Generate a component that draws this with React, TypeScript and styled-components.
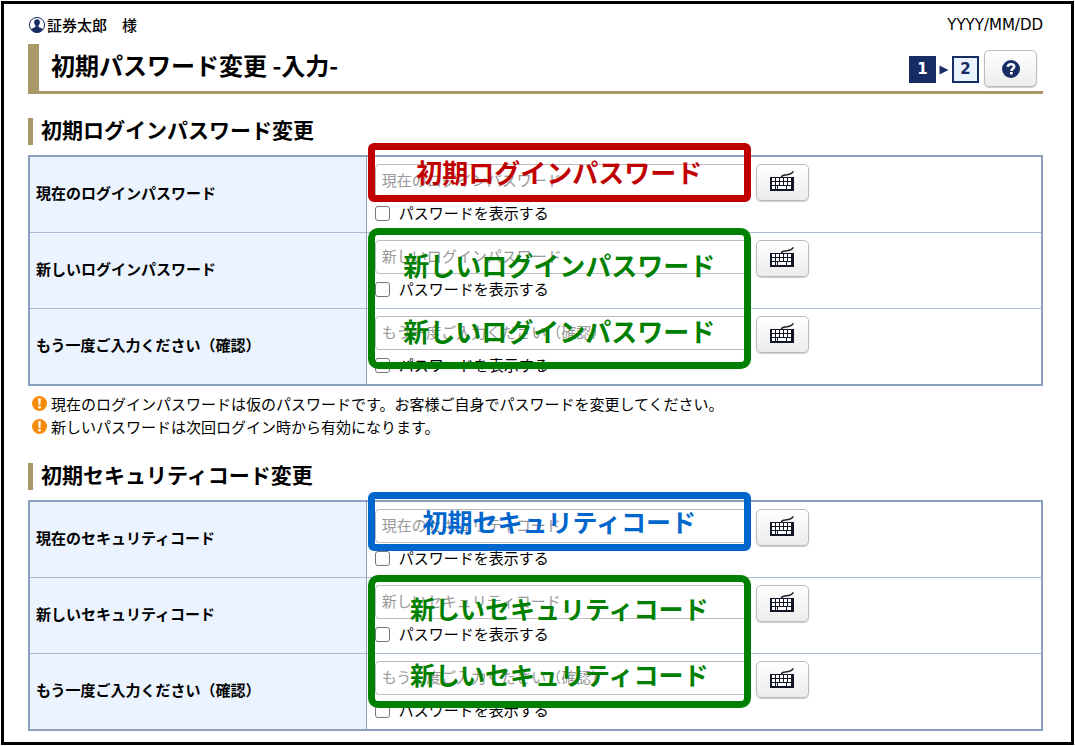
import React, { useId, useState } from "react";
import styled, { createGlobalStyle } from "styled-components";

const color = {
  navy: "#182c64",
  gold: "#ab9869",
  line: "#8aa0be",
  rowLine: "#a9bbd3",
  head: "#ebf3ff",
  orange: "#f68b0a",
  red: "#c00000",
  green: "#008000",
  blue: "#0066cc",
};

const GlobalStyle = createGlobalStyle`
  *, *::before, *::after { box-sizing: border-box; }
  body {
    margin: 0;
    background: #fff;
    color: #000;
    font: 15px/22px "Noto Sans CJK JP", sans-serif;
  }
  h1, h2, p { margin: 0; }
`;

const Page = styled.div`
  margin: 1px;
  padding: 10px 28px 11px 24px;
  border: 3px solid #000;
`;

const TopBar = styled.header`
  display: flex;
  justify-content: space-between;
  align-items: center;
  height: 22px;
  margin-bottom: 8px;
`;

const User = styled.div`
  display: flex;
  align-items: center;
  gap: 1px;
  font-weight: 500;
`;

const DateText = styled.time`
  font-family: "DejaVu Sans", sans-serif;
`;

const TitleBar = styled.div`
  display: flex;
  justify-content: space-between;
  align-items: flex-start;
  height: 50px;
  padding: 6px 6px 0 12px;
  border-bottom: 3px solid ${color.gold};
  border-left: 11px solid ${color.gold};
`;

const Title = styled.h1`
  font-size: 24px;
  line-height: 30px;
  font-weight: 700;
`;

const TitleTools = styled.div`
  display: flex;
  align-items: center;
  gap: 5px;
`;

const Steps = styled.div`
  display: flex;
  align-items: center;
  gap: 3px;
  padding-top: 2px;
`;

const Step = styled.span<{ $current?: boolean }>`
  width: 27px;
  height: 27px;
  border: 2px solid ${color.navy};
  background: ${(p) => (p.$current ? color.navy : color.head)};
  color: ${(p) => (p.$current ? "#fff" : color.navy)};
  font: bold 15px/23px "DejaVu Sans", sans-serif;
  text-align: center;
`;

const IconButton = styled.button`
  display: flex;
  flex: none;
  align-items: center;
  justify-content: center;
  width: 53px;
  height: 37px;
  padding: 0;
  border: 1px solid #bbb;
  border-radius: 5px;
  background: linear-gradient(#fff, #ececec);
  box-shadow: 0 1px 1px #ccc;
  cursor: pointer;
`;

const Section = styled.section`
  margin-top: 24px;
`;

const SectionTitle = styled.h2`
  margin-bottom: 10px;
  padding: 0 0 4px 8px;
  border-left: 5px solid ${color.gold};
  font-size: 21px;
  line-height: 23px;
  font-weight: 700;
`;

const Table = styled.table`
  width: 100%;
  border: 2px solid ${color.line};
  border-spacing: 0;
  table-layout: fixed;
`;

const HeadCell = styled.th`
  width: 33.3%;
  padding: 0 6px 4px;
  border-right: 1px solid ${color.line};
  border-bottom: 1px solid ${color.rowLine};
  background: ${color.head};
  font-weight: 700;
  text-align: left;
  tr:last-child > & { border-bottom: 0; }
`;

const FieldCell = styled.td`
  position: relative;
  padding: 7px 8px 8px;
  border-bottom: 1px solid ${color.rowLine};
  tr:last-child > & { border-bottom: 0; }
`;

const FieldLine = styled.div`
  display: flex;
  align-items: flex-start;
  gap: 7px;
  margin-bottom: 1px;
`;

const TextInput = styled.input`
  flex: 0 1 374px;
  min-width: 0;
  height: 34px;
  padding: 0 6px 4px;
  border: 1px solid #bbb;
  border-radius: 4px;
  background: #fff;
  font: 15px/22px "Noto Sans CJK JP", sans-serif;
  &::placeholder { color: #999; opacity: 1; }
`;

const CheckLabel = styled.label`
  display: flex;
  align-items: center;
  gap: 9px;
`;

const Checkbox = styled.input`
  appearance: none;
  width: 15px;
  height: 15px;
  margin: 0;
  border: 1px solid #767676;
  border-radius: 3px;
  background: #fff;
  &:checked { background: ${color.navy}; }
`;

const Callout = styled.div<{ $color: string; $top: number; $height: number; $radius: number; $size: number }>`
  position: absolute;
  z-index: 1;
  left: 1px;
  top: ${(p) => p.$top}px;
  height: ${(p) => p.$height}px;
  width: 383px;
  display: flex;
  flex-direction: column;
  justify-content: center;
  gap: 30px;
  padding-bottom: 2px;
  border: 7px solid ${(p) => p.$color};
  border-radius: ${(p) => p.$radius}px;
  color: ${(p) => p.$color};
  font-size: ${(p) => p.$size}px;
  line-height: 36px;
  font-weight: 700;
  text-align: center;
  white-space: nowrap;
  pointer-events: none;
`;

const Notes = styled.div`
  margin-top: 7px;
`;

const Note = styled.p`
  display: flex;
  align-items: center;
  gap: 4px;
  padding: 0 0 2px 4px;
  line-height: 21px;
`;

const UserIcon = () => (
  <svg width="18" height="18" viewBox="0 0 18 18" aria-hidden="true">
    <circle cx="9" cy="9" r="7.6" fill="#fff" stroke={color.navy} strokeWidth="1" />
    <path
      d="M9 3.2c-1.8 0-2.9 1.3-2.9 3.1 0 1.2.5 2.3 1.3 2.9v1.7L3 13c1.4 2.3 3.6 3.6 6 3.6s4.6-1.3 6-3.6l-4.4-2.1V9.2c.8-.6 1.3-1.7 1.3-2.9 0-1.8-1.1-3.1-2.9-3.1z"
      fill={color.navy}
    />
  </svg>
);

const ArrowIcon = () => (
  <svg width="10" height="10" viewBox="0 0 10 10" aria-hidden="true">
    <path d="M.5.5 9.5 5 .5 9.5z" fill={color.navy} />
  </svg>
);

const HelpIcon = () => (
  <svg width="18" height="18" viewBox="0 0 18 18" aria-hidden="true">
    <circle cx="9" cy="9" r="9" fill={color.navy} />
    <path
      d="M5.8 6.9C5.9 5.1 7.200 4.200 9.100 4.200c1.900 0 3.100.9 3.100 2.400 0 2.100-2.800 2.200-2.800 4.300"
      fill="none"
      stroke="#fff"
      strokeWidth="2.600"
    />
    <rect x="8" y="12" width="2.700" height="2.500" fill="#fff" />
  </svg>
);

const KeyboardIcon = () => (
  <svg width="24" height="24" viewBox="0 0 24 24" aria-hidden="true">
    <path d="M11.500 6c.3-2 1.500-2 4-2.100C19 3.700 22 3 23.300.4" fill="none" stroke="#222" strokeWidth="1.500" />
    <rect y="6" width="24" height="14" fill="#111525" />
    <g fill="#fff">
      {[2, 6, 10, 14, 18].map((x) => (
        <React.Fragment key={x}>
          <rect x={x} y="7" width="3" height="3" />
          <rect x={x} y="11" width="3" height="3" />
        </React.Fragment>
      ))}
      <rect x="2" y="15" width="3" height="3" />
      <rect x="6" y="15" width="1" height="3" />
      <rect x="8" y="15" width="8" height="3" />
      <rect x="17" y="15" width="4" height="3" />
    </g>
  </svg>
);

const AlertIcon = () => (
  <svg width="15" height="15" viewBox="0 0 15 15" aria-hidden="true">
    <circle cx="7.5" cy="7.5" r="7.5" fill={color.orange} />
    <path d="M6.200 2.300h2.600l-.4 6.700H6.600z" fill="#fff" />
    <circle cx="7.5" cy="11.300" r="1.400" fill="#fff" />
  </svg>
);

type CalloutData = {
  color: string;
  top: number;
  height: number;
  radius: number;
  size: number;
  lines: string[];
};
type FieldData = { label: string; placeholder: string; callout?: CalloutData };

function PasswordRow({ label, placeholder, callout }: FieldData) {
  const id = useId();
  const [visible, setVisible] = useState(false);
  return (
    <tr>
      <HeadCell scope="row">
        <label htmlFor={id}>{label}</label>
      </HeadCell>
      <FieldCell>
        <FieldLine>
          <TextInput id={id} type={visible ? "text" : "password"} placeholder={placeholder} />
          <IconButton type="button" aria-label="ソフトウェアキーボード">
            <KeyboardIcon />
          </IconButton>
        </FieldLine>
        <CheckLabel>
          <Checkbox type="checkbox" checked={visible} onChange={(e) => setVisible(e.target.checked)} />
          パスワードを表示する
        </CheckLabel>
        {callout && (
          <Callout
            $color={callout.color}
            $top={callout.top}
            $height={callout.height}
            $radius={callout.radius}
            $size={callout.size}
          >
            {callout.lines.map((line, i) => (
              <span key={i}>{line}</span>
            ))}
          </Callout>
        )}
      </FieldCell>
    </tr>
  );
}

const confirmField: FieldData = {
  label: "もう一度ご入力ください（確認）",
  placeholder: "もう一度ご入力ください（確認）",
};

const loginFields: FieldData[] = [
  {
    label: "現在のログインパスワード",
    placeholder: "現在のログインパスワード",
    callout: { color: color.red, top: -14, height: 59, radius: 6, size: 26, lines: ["初期ログインパスワード"] },
  },
  {
    label: "新しいログインパスワード",
    placeholder: "新しいログインパスワード",
    callout: {
      color: color.green,
      top: -5,
      height: 141,
      radius: 10,
      size: 26,
      lines: ["新しいログインパスワード", "新しいログインパスワード"],
    },
  },
  confirmField,
];

const codeFields: FieldData[] = [
  {
    label: "現在のセキュリティコード",
    placeholder: "現在のセキュリティコード",
    callout: { color: color.blue, top: -10, height: 59, radius: 6, size: 25, lines: ["初期セキュリティコード"] },
  },
  {
    label: "新しいセキュリティコード",
    placeholder: "新しいセキュリティコード",
    callout: {
      color: color.green,
      top: -3,
      height: 133,
      radius: 10,
      size: 25,
      lines: ["新しいセキュリティコード", "新しいセキュリティコード"],
    },
  },
  confirmField,
];

function FieldTable({ fields }: { fields: FieldData[] }) {
  return (
    <Table>
      <tbody>
        {fields.map((f) => (
          <PasswordRow key={f.label} {...f} />
        ))}
      </tbody>
    </Table>
  );
}

export default function App() {
  return (
    <>
      <GlobalStyle />
      <Page>
        <TopBar>
          <User>
            <UserIcon />
            証券太郎　様
          </User>
          <DateText>YYYY/MM/DD</DateText>
        </TopBar>
        <TitleBar>
          <Title>初期パスワード変更 -入力-</Title>
          <TitleTools>
            <Steps>
              <Step $current>1</Step>
              <ArrowIcon />
              <Step>2</Step>
            </Steps>
            <IconButton type="button" aria-label="ヘルプ">
              <HelpIcon />
            </IconButton>
          </TitleTools>
        </TitleBar>
        <Section>
          <SectionTitle>初期ログインパスワード変更</SectionTitle>
          <FieldTable fields={loginFields} />
          <Notes>
            <Note>
              <AlertIcon />
              現在のログインパスワードは仮のパスワードです。お客様ご自身でパスワードを変更してください。
            </Note>
            <Note>
              <AlertIcon />
              新しいパスワードは次回ログイン時から有効になります。
            </Note>
          </Notes>
        </Section>
        <Section>
          <SectionTitle>初期セキュリティコード変更</SectionTitle>
          <FieldTable fields={codeFields} />
        </Section>
      </Page>
    </>
  );
}
